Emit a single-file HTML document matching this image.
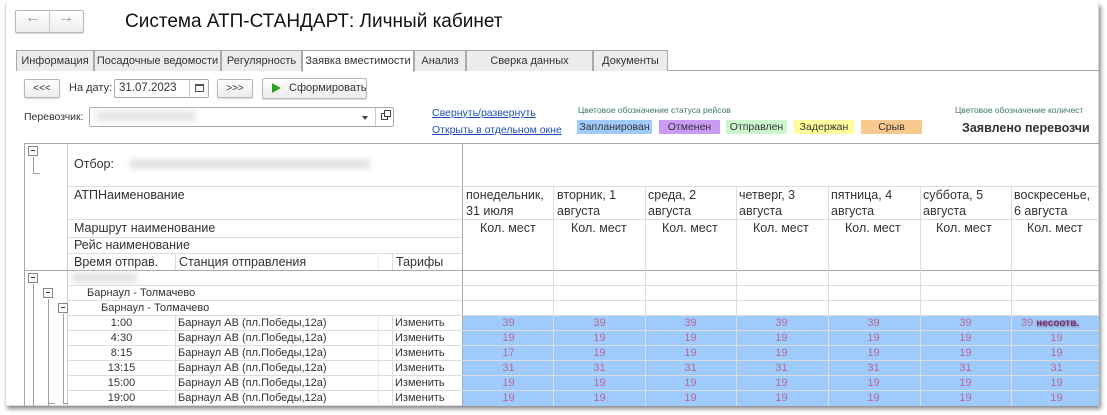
<!DOCTYPE html>
<html><head><meta charset="utf-8"><style>
*{box-sizing:border-box;margin:0;padding:0}
body{width:1107px;height:415px;background:#fff;font-family:"Liberation Sans",Arial,sans-serif;position:relative;overflow:hidden;color:#333}
.a{position:absolute;white-space:nowrap}
.win{left:5px;top:3px;width:1094px;height:403px;border:1px solid #d8d8d8;border-top:none;box-shadow:2px 3px 4px rgba(0,0,0,.45);background:#fff}
.btn{position:absolute;border:1px solid #b8b8b8;border-radius:2px;background:linear-gradient(#fff,#ececec);font-size:11px;text-align:center;color:#333;box-shadow:0 1px 1px rgba(0,0,0,.15);white-space:nowrap}
.tab{position:absolute;top:50px;height:21px;border:1px solid #a9a9a9;border-bottom:none;background:#ececec;font-size:11px;line-height:20px;text-align:center;color:#333;white-space:nowrap}
.lg{position:absolute;top:120px;height:14px;font-size:10.5px;line-height:14px;text-align:center;color:#333}
.hl{position:absolute;height:1px;background:#dcdcdc}
.vl{position:absolute;width:1px;background:#dcdcdc}
.t{position:absolute;font-size:12.5px;color:#333;white-space:nowrap}
.sm{font-size:11px}
.blue{position:absolute;left:463px;top:315px;width:636px;height:91px;background:#9ecbfc}
.n{position:absolute;font-size:11px;color:#b76a93;text-align:center;width:91px}
.tl{position:absolute;background:#a0a0a0}
.pm{position:absolute;width:10px;height:10px;border:1px solid #888;background:#fafafa}
.pm:after{content:"";position:absolute;left:2px;top:3px;width:4px;height:1px;background:#333}
</style></head><body>
<div class="a win"></div>
<div class="btn" style="left:15px;top:10px;width:69px;height:23px"></div>
<div class="a" style="left:49px;top:11px;width:1px;height:21px;background:#ccc"></div>
<div class="a" style="left:25px;top:9px;font-size:16px;color:#999">&#8592;</div>
<div class="a" style="left:58px;top:9px;font-size:16px;color:#999">&#8594;</div>
<div class="a" style="left:125px;top:11px;font-size:19px;color:#111">Система АТП-СТАНДАРТ: Личный кабинет</div>
<div class="a" style="left:16px;top:70px;width:1083px;height:1px;background:#a9a9a9"></div>
<div class="tab" style="left:16px;width:78px">Информация</div>
<div class="tab" style="left:94px;width:127px">Посадочные ведомости</div>
<div class="tab" style="left:221px;width:81px">Регулярность</div>
<div class="tab" style="left:302px;width:112px;background:#fff;height:22px">Заявка вместимости</div>
<div class="tab" style="left:414px;width:52px">Анализ</div>
<div class="tab" style="left:466px;width:127px">Сверка данных</div>
<div class="tab" style="left:593px;width:75px">Документы</div>
<div class="btn" style="left:24px;top:79px;width:36px;height:19px;line-height:17px;font-size:10px">&lt;&lt;&lt;</div>
<div class="a" style="left:69px;top:82px;font-size:11px">На дату:</div>
<div class="a" style="left:114px;top:79px;width:95px;height:19px;border:1px solid #aaa;border-radius:2px;font-size:11.5px;line-height:17px;padding-left:4px">31.07.2023</div>
<div class="a" style="left:189px;top:80px;width:1px;height:17px;background:#ccc"></div>
<div class="a" style="left:195px;top:84px;width:9px;height:8px;border:1px solid #555;border-top-width:2px"></div>
<div class="btn" style="left:217px;top:79px;width:36px;height:19px;line-height:17px;font-size:10px">&gt;&gt;&gt;</div>
<div class="btn" style="left:262px;top:78px;width:105px;height:21px;line-height:19px;font-size:11px;text-align:left;padding-left:26px">Сформировать</div>
<div class="a" style="left:272px;top:83px;width:0;height:0;border-left:9px solid #27a327;border-top:5px solid transparent;border-bottom:5px solid transparent"></div>
<div class="a" style="left:24px;top:111px;font-size:10.5px">Перевозчик:</div>
<div class="a" style="left:89px;top:107px;width:305px;height:20px;border:1px solid #aaa;border-radius:2px"></div>
<div class="a" style="left:96px;top:110px;width:100px;height:12px;background:#e8e8e8;filter:blur(3px)"></div>
<div class="a" style="left:375px;top:108px;width:1px;height:18px;background:#ccc"></div>
<div class="a" style="left:362px;top:116px;border-top:4px solid #444;border-left:3px solid transparent;border-right:3px solid transparent"></div>
<div class="a" style="left:381px;top:113px;width:7px;height:7px;border:1px solid #444"></div>
<div class="a" style="left:384px;top:110px;width:7px;height:7px;border:1px solid #444;background:#fff"></div>
<div class="a" style="left:432px;top:107px;font-size:10.5px;color:#1d4fb8;text-decoration:underline">Свернуть/развернуть</div>
<div class="a" style="left:432px;top:124px;font-size:10.5px;color:#1d4fb8;text-decoration:underline">Открыть в отдельном окне</div>
<div class="a" style="left:578px;top:105px;font-size:8.5px;color:#3e7a5a">Цветовое обозначение статуса рейсов</div>
<div class="lg" style="left:577px;width:75px;background:#9ecbfc">Запланирован</div>
<div class="lg" style="left:659px;width:61px;background:#c99bf7">Отменен</div>
<div class="lg" style="left:726px;width:61px;background:#cdf8cd">Отправлен</div>
<div class="lg" style="left:794px;width:60px;background:#fefe9c">Задержан</div>
<div class="lg" style="left:861px;width:61px;background:#f9c990">Срыв</div>
<div class="a" style="left:955px;top:105px;font-size:8.5px;color:#3e7a5a">Цветовое обозначение количест</div>
<div class="a" style="left:962px;top:121px;font-size:12.5px;font-weight:bold;color:#333">Заявлено перевозчи</div>
<div class="a" style="left:24px;top:143px;width:1075px;height:263px;border-top:1px solid #a9a9a9;border-left:1px solid #a9a9a9"></div>
<div class="a" style="left:24px;top:270px;width:1075px;height:1px;background:#a9a9a9"></div>
<div class="a" style="left:67px;top:144px;width:1px;height:126px;background:#d8cfb2"></div>
<div class="a" style="left:67px;top:271px;width:1px;height:135px;background:#d8cfb2"></div>
<div class="a" style="left:462px;top:144px;width:1px;height:262px;background:#a9a9a9"></div>
<div class="hl" style="left:68px;top:186px;width:1031px"></div>
<div class="hl" style="left:68px;top:219px;width:1031px"></div>
<div class="hl" style="left:68px;top:237px;width:394px"></div>
<div class="hl" style="left:68px;top:253px;width:394px"></div>
<div class="vl" style="left:175px;top:253px;height:17px"></div>
<div class="vl" style="left:175px;top:315px;height:91px"></div>
<div class="vl" style="left:378px;top:253px;height:17px;background:#f3ead0"></div>
<div class="vl" style="left:392px;top:253px;height:17px"></div>
<div class="vl" style="left:378px;top:315px;height:91px;background:#f3ead0"></div>
<div class="vl" style="left:392px;top:315px;height:91px"></div>
<div class="hl" style="left:68px;top:285px;width:1031px"></div>
<div class="hl" style="left:68px;top:300px;width:1031px"></div>
<div class="blue"></div>
<div class="hl" style="left:68px;top:315px;width:1031px"></div>
<div class="hl" style="left:68px;top:330px;width:1031px"></div>
<div class="hl" style="left:68px;top:345px;width:1031px"></div>
<div class="hl" style="left:68px;top:360px;width:1031px"></div>
<div class="hl" style="left:68px;top:375px;width:1031px"></div>
<div class="hl" style="left:68px;top:390px;width:1031px"></div>
<div class="vl" style="left:553px;top:186px;height:220px"></div>
<div class="vl" style="left:645px;top:186px;height:220px"></div>
<div class="vl" style="left:736px;top:186px;height:220px"></div>
<div class="vl" style="left:828px;top:186px;height:220px"></div>
<div class="vl" style="left:920px;top:186px;height:220px"></div>
<div class="vl" style="left:1011px;top:186px;height:220px"></div>
<div class="pm" style="left:28px;top:146px"></div>
<div class="tl" style="left:33px;top:157px;width:1px;height:16px"></div>
<div class="tl" style="left:33px;top:173px;width:7px;height:1px"></div>
<div class="pm" style="left:28px;top:273px"></div>
<div class="tl" style="left:33px;top:284px;width:1px;height:122px"></div>
<div class="pm" style="left:43px;top:288px"></div>
<div class="tl" style="left:48px;top:299px;width:1px;height:107px"></div>
<div class="pm" style="left:58px;top:303px"></div>
<div class="tl" style="left:63px;top:314px;width:1px;height:89px"></div>
<div class="tl" style="left:63px;top:403px;width:5px;height:1px"></div>
<div class="tl" style="left:48px;top:403px;width:7px;height:1px"></div>
<div class="t" style="left:74px;top:157px">Отбор:</div>
<div class="a" style="left:130px;top:159px;width:240px;height:10px;background:#e3e3e3;filter:blur(3px)"></div>
<div class="t" style="left:74px;top:188px">АТПНаименование</div>
<div class="t" style="left:74px;top:221px">Маршрут наименование</div>
<div class="t" style="left:74px;top:238px">Рейс наименование</div>
<div class="t" style="left:74px;top:255px">Время отправ.</div>
<div class="t" style="left:179px;top:255px">Станция отправления</div>
<div class="t" style="left:396px;top:255px">Тарифы</div>
<div class="t" style="left:466px;top:187px;line-height:16px">понедельник,<br>31 июля</div>
<div class="t" style="left:557px;top:187px;line-height:16px">вторник, 1<br>августа</div>
<div class="t" style="left:648px;top:187px;line-height:16px">среда, 2<br>августа</div>
<div class="t" style="left:739px;top:187px;line-height:16px">четверг, 3<br>августа</div>
<div class="t" style="left:831px;top:187px;line-height:16px">пятница, 4<br>августа</div>
<div class="t" style="left:923px;top:187px;line-height:16px">суббота, 5<br>августа</div>
<div class="t" style="left:1014px;top:187px;line-height:16px">воскресенье,<br>6 августа</div>
<div class="t" style="left:480px;top:221px">Кол. мест</div>
<div class="t" style="left:571px;top:221px">Кол. мест</div>
<div class="t" style="left:662px;top:221px">Кол. мест</div>
<div class="t" style="left:753px;top:221px">Кол. мест</div>
<div class="t" style="left:845px;top:221px">Кол. мест</div>
<div class="t" style="left:936px;top:221px">Кол. мест</div>
<div class="t" style="left:1027px;top:221px">Кол. мест</div>
<div class="a" style="left:72px;top:273px;width:65px;height:10px;background:#e3e3e3;filter:blur(3px)"></div>
<div class="t sm" style="left:87px;top:287px">Барнаул - Толмачево</div>
<div class="t sm" style="left:101px;top:302px">Барнаул - Толмачево</div>
<div class="t sm" style="left:68px;width:107px;text-align:center;top:317px">1:00</div>
<div class="t sm" style="left:68px;width:107px;text-align:center;top:332px">4:30</div>
<div class="t sm" style="left:68px;width:107px;text-align:center;top:347px">8:15</div>
<div class="t sm" style="left:68px;width:107px;text-align:center;top:362px">13:15</div>
<div class="t sm" style="left:68px;width:107px;text-align:center;top:377px">15:00</div>
<div class="t sm" style="left:68px;width:107px;text-align:center;top:392px">19:00</div>
<div class="t sm" style="left:178px;top:317px">Барнаул АВ (пл.Победы,12а)</div>
<div class="t sm" style="left:178px;top:332px">Барнаул АВ (пл.Победы,12а)</div>
<div class="t sm" style="left:178px;top:347px">Барнаул АВ (пл.Победы,12а)</div>
<div class="t sm" style="left:178px;top:362px">Барнаул АВ (пл.Победы,12а)</div>
<div class="t sm" style="left:178px;top:377px">Барнаул АВ (пл.Победы,12а)</div>
<div class="t sm" style="left:178px;top:392px">Барнаул АВ (пл.Победы,12а)</div>
<div class="t sm" style="left:395px;top:317px">Изменить</div>
<div class="t sm" style="left:395px;top:332px">Изменить</div>
<div class="t sm" style="left:395px;top:347px">Изменить</div>
<div class="t sm" style="left:395px;top:362px">Изменить</div>
<div class="t sm" style="left:395px;top:377px">Изменить</div>
<div class="t sm" style="left:395px;top:392px">Изменить</div>
<div class="n" style="left:463px;top:317px">39</div><div class="n" style="left:554px;top:317px">39</div><div class="n" style="left:645px;top:317px">39</div><div class="n" style="left:736px;top:317px">39</div><div class="n" style="left:828px;top:317px">39</div><div class="n" style="left:920px;top:317px">39</div>
<div class="a" style="left:1021px;top:317px;font-size:11px;color:#b76a93">39 <b style="color:#7a2a7a;font-size:10px;text-shadow:1px 1px 2px #777">несоотв.</b></div>
<div class="n" style="left:463px;top:332px">19</div><div class="n" style="left:554px;top:332px">19</div><div class="n" style="left:645px;top:332px">19</div><div class="n" style="left:736px;top:332px">19</div><div class="n" style="left:828px;top:332px">19</div><div class="n" style="left:920px;top:332px">19</div><div class="n" style="left:1011px;top:332px">19</div>
<div class="n" style="left:463px;top:347px">17</div><div class="n" style="left:554px;top:347px">19</div><div class="n" style="left:645px;top:347px">19</div><div class="n" style="left:736px;top:347px">19</div><div class="n" style="left:828px;top:347px">19</div><div class="n" style="left:920px;top:347px">19</div><div class="n" style="left:1011px;top:347px">19</div>
<div class="n" style="left:463px;top:362px">31</div><div class="n" style="left:554px;top:362px">31</div><div class="n" style="left:645px;top:362px">31</div><div class="n" style="left:736px;top:362px">31</div><div class="n" style="left:828px;top:362px">31</div><div class="n" style="left:920px;top:362px">31</div><div class="n" style="left:1011px;top:362px">31</div>
<div class="n" style="left:463px;top:377px">19</div><div class="n" style="left:554px;top:377px">19</div><div class="n" style="left:645px;top:377px">19</div><div class="n" style="left:736px;top:377px">19</div><div class="n" style="left:828px;top:377px">19</div><div class="n" style="left:920px;top:377px">19</div><div class="n" style="left:1011px;top:377px">19</div>
<div class="n" style="left:463px;top:392px">19</div><div class="n" style="left:554px;top:392px">19</div><div class="n" style="left:645px;top:392px">19</div><div class="n" style="left:736px;top:392px">19</div><div class="n" style="left:828px;top:392px">19</div><div class="n" style="left:920px;top:392px">19</div><div class="n" style="left:1011px;top:392px">19</div>
</body></html>
